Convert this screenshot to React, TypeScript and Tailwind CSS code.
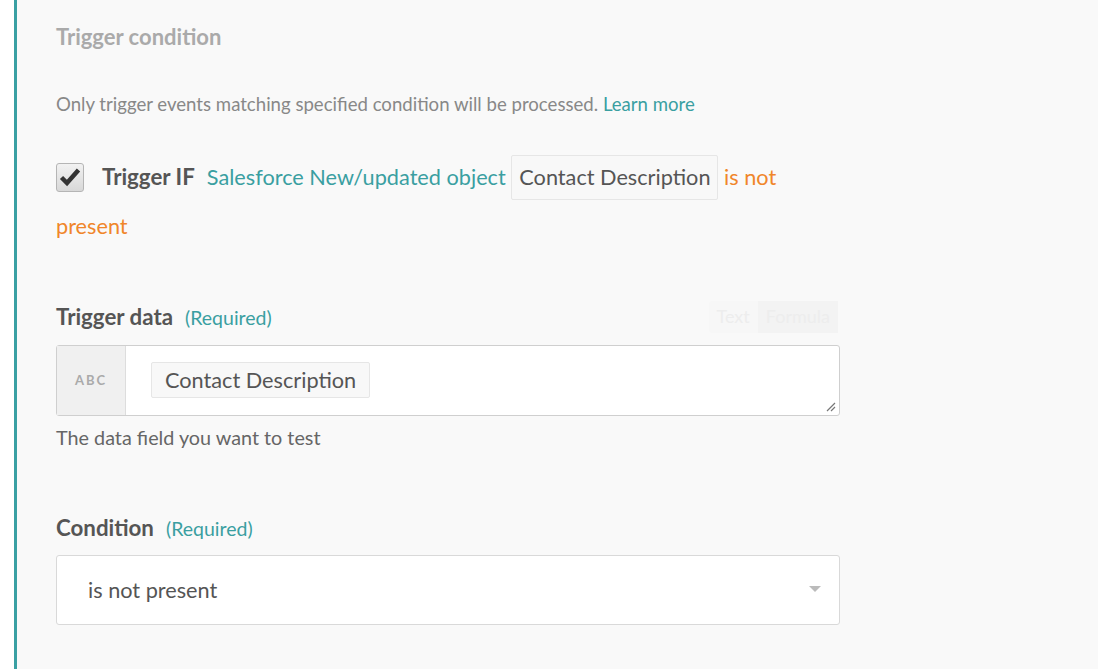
function Pill({ children, className = '' }: { children: React.ReactNode; className?: string }) {
  return (
    <span className={`inline-flex items-center border border-[#e6e6e6] bg-[#f8f8f8] rounded-[2px] leading-none text-[#555] ${className}`}>
      {children}
    </span>
  )
}

function Label({ title }: { title: string }) {
  return (
    <div className="flex items-baseline gap-3">
      <span className="text-[22.3px] font-bold text-[#555]">{title}</span>
      <span className="text-[19.5px] text-[#3a9fa1]">(Required)</span>
    </div>
  )
}

export default function App() {
  return (
    <div className="min-h-[669px] w-[1098px] bg-white pl-[14px] font-['Lato',sans-serif]">
      <div className="min-h-[669px] border-l-[3px] border-[#3aa0a3] bg-[#f9f9f9] pl-[39px] pt-[20px]">
        <h2 className="text-[22px] font-bold leading-[34px] text-[#aaaaaa]">Trigger condition</h2>

        <p className="mt-[36px] text-[18.6px] leading-[28px] text-[#888]">
          Only trigger events matching specified condition will be processed.{' '}
          <a href="#" className="text-[#3a9fa1]">Learn more</a>
        </p>

        <div className="mt-[34px] w-[740px] text-[21.7px] leading-[49px]">
          <span className="mr-[18px] inline-flex h-[29px] w-[28px] translate-y-[2px] items-center justify-center rounded-[3px] border border-[#b5b5b5] bg-gradient-to-b from-[#f2f2f2] to-[#d8d8d8] align-baseline">
            <svg width="22" height="20" viewBox="0 0 22 20">
              <path d="M2.5 10.5 L8 16 L19.5 3" fill="none" stroke="#333" strokeWidth="4.5" strokeLinejoin="miter" />
            </svg>
          </span>
          <span className="mr-[12px] text-[22.3px] font-bold text-[#555]">Trigger IF</span>
          <span className="text-[#3a9fa1]">Salesforce New/updated object</span>{' '}
          <Pill className="h-[45px] px-[7px]">Contact Description</Pill>{' '}
          <span className="text-[#f0862a]">is not present</span>
        </div>

        <div className="mt-[49px] w-[784px]">
          <div className="flex items-center justify-between">
            <Label title="Trigger data" />
            <div className="mr-[2px] flex h-[32px] items-center rounded-[3px] bg-[#f7f7f7] text-[18px] text-[#ededed]">
              <span className="px-[8px]">Text</span>
              <span className="flex h-full items-center bg-[#f3f3f3] px-[8px]">Formula</span>
            </div>
          </div>
          <div className="relative mt-[12px] flex h-[71px] rounded-[3px] border border-[#cfcfcf] bg-white">
            <div className="flex w-[69px] items-center justify-center border-r border-[#dddddd] bg-[#f0f0f0] text-[13px] font-bold tracking-[2px] text-[#aaa]">
              ABC
            </div>
            <div className="flex items-start pl-[25px] pt-[16px]">
              <Pill className="h-[36px] px-[13px] text-[21.7px]">Contact Description</Pill>
            </div>
            <svg className="absolute bottom-[3px] right-[3px]" width="11" height="11" viewBox="0 0 11 11">
              <path d="M10 2 L2 10 M10 6 L6 10" stroke="#777" strokeWidth="1.2" />
            </svg>
          </div>
          <p className="mt-[8px] text-[19.8px] leading-[26px] text-[#666]">The data field you want to test</p>
        </div>

        <div className="mt-[61px] w-[784px]">
          <Label title="Condition" />
          <div className="mt-[10px] flex h-[70px] items-center justify-between rounded-[3px] border border-[#d9d9d9] bg-white pl-[31px] pr-[18px]">
            <span className="text-[21.7px] text-[#555]">is not present</span>
            <svg width="12" height="7" viewBox="0 0 12 7">
              <path d="M0 0 L12 0 L6 6 Z" fill="#bbb" />
            </svg>
          </div>
        </div>
      </div>
    </div>
  )
}
